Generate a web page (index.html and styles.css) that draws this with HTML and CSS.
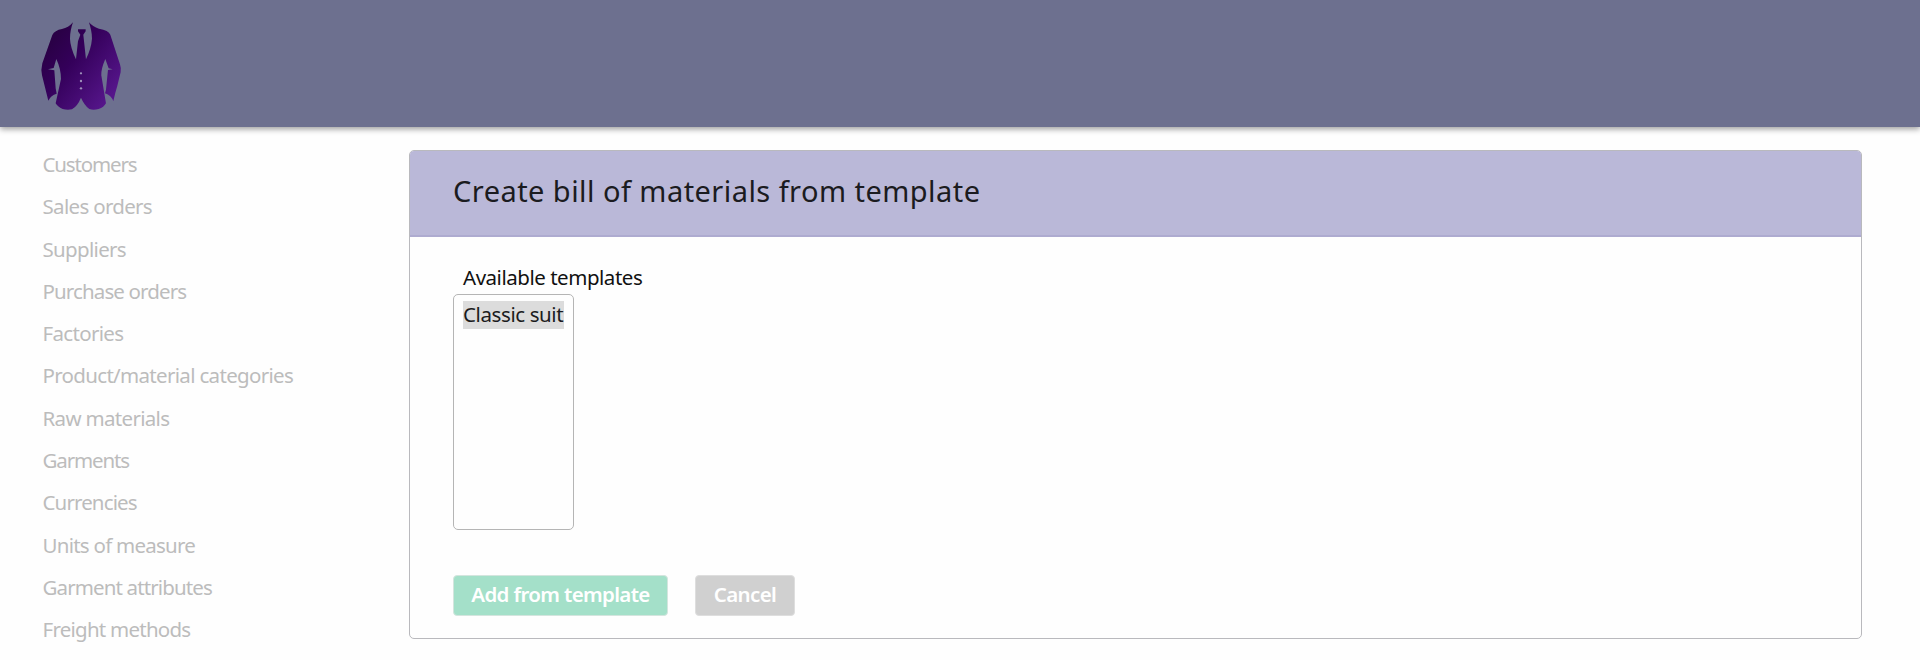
FILE: index.html
```html
<!DOCTYPE html>
<html lang="en">
<head>
<meta charset="utf-8">
<title>Create bill of materials from template</title>
<link rel="stylesheet" href="styles.css">
</head>
<body>
<header class="topbar">
  <svg class="logo" viewBox="30 30 250 275" role="img" aria-label="Suit">
    <defs>
      <linearGradient id="cloth" gradientUnits="userSpaceOnUse" x1="60" y1="100" x2="250" y2="250">
        <stop offset="0" stop-color="#2a0046"/>
        <stop offset=".35" stop-color="#34005a"/>
        <stop offset="1" stop-color="#55158a"/>
      </linearGradient>
    </defs>
    <g fill="url(#cloth)">
      <path d="M129 37C124 52 120 68 120 86Q121 112 138 148L144 94L151 74L144 64V58H167V64L160 74L168 148Q184 114 186 86C186 68 182 54 177 37Q188 50 207 56Q236 61 241 74L270 163Q274 174 272 187L262 228Q255 250 250 274Q244 256 225 250L228 239L234 180L248 178L236 175L226 147Q213 177 214 196L228 280Q222 292 206 297Q190 301 178 297Q163 286 153 263Q143 288 126 298Q112 301 98 297Q82 290 77 280L93 207Q93 177 79 147L71 174L54 178L73 181L77 235L80 251Q63 255 55 272L36 196Q32 180 37 160L67 75Q74 61 96 57Q115 54 129 37Z"/>
    </g>
    <g class="buttons"><circle cx="153" cy="190" r="3.5"/><circle cx="153" cy="213" r="3.5"/><circle cx="153" cy="235" r="3.5"/></g>
  </svg>
</header>
<div class="layout">
  <nav class="sidebar">
    <a class="tightest">Customers</a>
    <a>Sales orders</a>
    <a>Suppliers</a>
    <a class="tight">Purchase orders</a>
    <a>Factories</a>
    <a>Product/material categories</a>
    <a>Raw materials</a>
    <a class="tightest">Garments</a>
    <a class="tight">Currencies</a>
    <a class="snug">Units of measure</a>
    <a class="tight">Garment attributes</a>
    <a class="snug">Freight methods</a>
  </nav>
  <main class="panel">
    <h1 class="panel-title">Create bill of materials from template</h1>
    <div class="panel-body">
      <div class="label">Available templates</div>
      <div class="listbox"><div class="option">Classic suit</div></div>
      <div class="actions">
        <button class="btn primary">Add from template</button>
        <button class="btn cancel">Cancel</button>
      </div>
    </div>
  </main>
</div>
</body>
</html>
```
FILE: styles.css
```css
* { box-sizing: border-box; }
body {
  margin: 0;
  height: 660px;
  overflow: hidden;
  background: #fefefe;
  color: #1b1b20;
  font: 20.5px/28px "Noto Sans", sans-serif;
  white-space: nowrap;
}
.topbar {
  height: 127px;
  padding: 20px 0 0 40px;
  background: #6d708f;
  box-shadow: 0 2px 6px rgba(0, 0, 0, .4);
}
.logo { display: block; width: 83.3px; height: 91.7px; }
.buttons { fill: #9d8fba; }
.layout { display: flex; align-items: flex-start; }
.sidebar {
  display: flex;
  flex-direction: column;
  align-items: flex-start;
  gap: 14.3px;
  width: 409px;
  padding: 23px 0 0 42.5px;
  color: #bcbcbc;
  letter-spacing: -.68px;
}
.snug { letter-spacing: -.75px; }
.tight { letter-spacing: -.87px; }
.tightest { letter-spacing: -1.14px; }
.panel {
  width: 1453px;
  height: 489px;
  margin-top: 23px;
  border: 1px solid #b9b9bd;
  border-radius: 5px;
  overflow: hidden;
}
.panel-title {
  height: 86px;
  margin: 0;
  padding: 20px 0 0 43px;
  border-bottom: 2px solid #aeabd0;
  background: #bab8d8;
  font-size: 29px;
  font-weight: 400;
  line-height: 40px;
  letter-spacing: .45px;
}
.panel-body { padding: 26px 43px 0; }
.label { height: 31px; padding-left: 10px; letter-spacing: -.47px; color: #111; }
.listbox {
  width: 121px;
  height: 236px;
  padding: 6px 9px;
  border: 1px solid #b5b5b5;
  border-radius: 5px;
}
.option { height: 28px; line-height: 27px; background: #dcdcdc; letter-spacing: -.4px; }
.actions { display: flex; gap: 27px; margin-top: 45px; }
.btn {
  height: 41px;
  padding: 0 0 3px;
  border: 1px solid #d4e5de;
  border-radius: 4px;
  color: #fff;
  font: 600 20.5px/36px "Noto Sans", sans-serif;
  letter-spacing: -.65px;
}
.primary { width: 215px; background: #a4e0c9; }
.cancel { width: 100px; background: #d0d0d0; border-color: #dedede; }
```
